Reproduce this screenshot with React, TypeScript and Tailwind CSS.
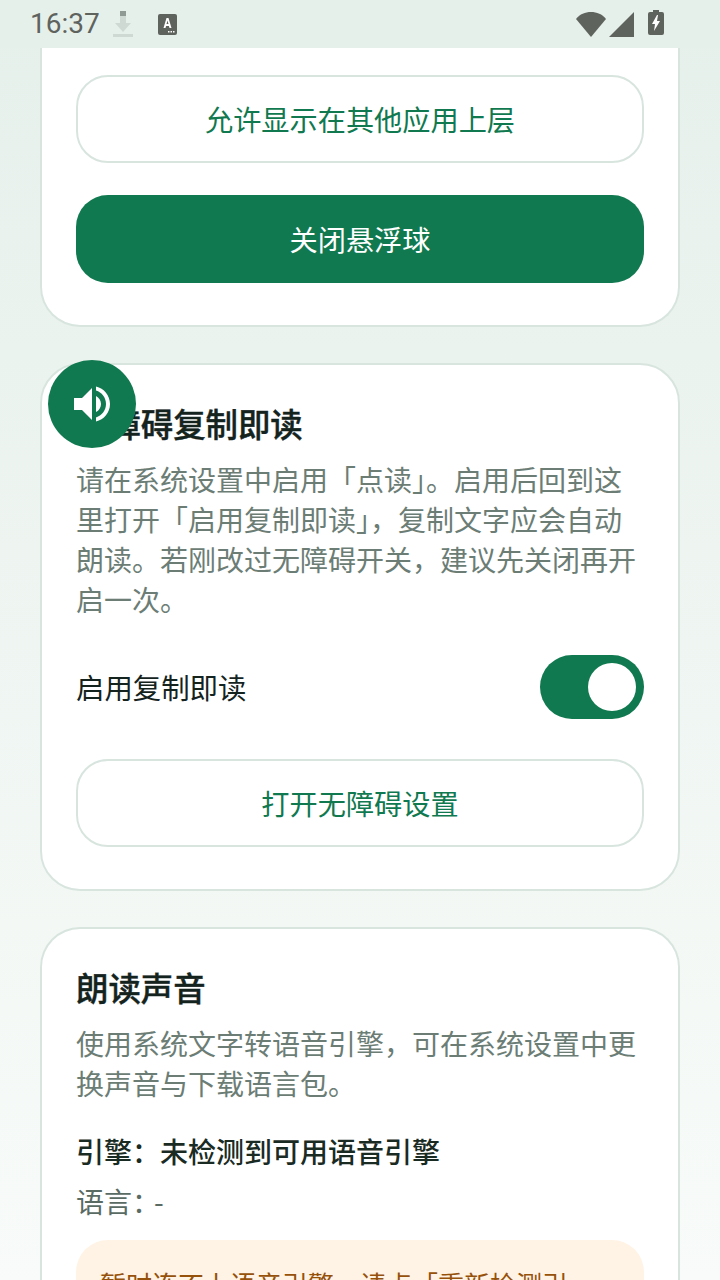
const cjk = "font-['Noto_Sans_CJK_SC','Noto_Sans',sans-serif]";

function StatusBar() {
  return (
    <div className="flex h-12 shrink-0 items-center justify-between bg-[#e6f0eb] pl-[30px] pr-[56px]">
      <div className="flex items-center">
        <span className="font-['Roboto',sans-serif] text-[28px] leading-none text-[#5f635e]">16:37</span>
        <svg width="20" height="26" viewBox="0 0 20 26" className="ml-[13px]">
          <rect x="7" y="0" width="6" height="5" fill="#8f9a94" />
          <rect x="7" y="5" width="6" height="7" fill="#cfd9d3" />
          <path d="M2 12h16l-8 9z" fill="#cfd9d3" />
          <rect x="0" y="23" width="20" height="3" fill="#cfd9d3" />
        </svg>
        <svg width="19" height="21" viewBox="0 0 19 21" className="ml-[25px]">
          <rect width="19" height="21" rx="2" fill="#5f635e" />
          <path d="M5.500 14l3-10h2l3 10h-2l-.6-2H8.100l-.6 2zm3-4h2l-1-3.500z" fill="#fff" />
          <rect x="10" y="17" width="1.500" height="1.500" fill="#fff" />
          <rect x="12.500" y="17" width="1.500" height="1.500" fill="#fff" />
          <rect x="15" y="17" width="1.500" height="1.500" fill="#fff" />
        </svg>
      </div>
      <div className="flex items-center">
        <svg width="30" height="25" viewBox="0 0 30 25">
          <path d="M0 7C4 2 9 0 15 0s11 2 15 7L15 25z" fill="#5f635e" />
        </svg>
        <svg width="25" height="25" viewBox="0 0 25 25" className="ml-[3px] mt-[1px]">
          <path d="M25 0v25H0z" fill="#5f635e" />
        </svg>
        <svg width="16" height="25" viewBox="0 0 16 25" className="ml-[14px] -mt-[3px]">
          <path d="M5 0h6v2h3a2 2 0 0 1 2 2v19a2 2 0 0 1-2 2H2a2 2 0 0 1-2-2V4a2 2 0 0 1 2-2h3z" fill="#5f635e" />
          <path d="M9 5l-5 9h3l-1 7 6-10H9l1-6z" fill="#fff" />
        </svg>
      </div>
    </div>
  );
}

function OutlineButton({ label }: { label: string }) {
  return (
    <button className="h-[88px] w-full rounded-[32px] border-2 border-[#d8e5df] bg-white text-[28.2px] text-[#10794f]">
      {label}
    </button>
  );
}

export default function App() {
  return (
    <div lang="zh-CN" className={`relative flex h-[1280px] w-[720px] flex-col overflow-hidden bg-gradient-to-b from-[#e6f0eb] to-[#f8fbf9] ${cjk}`}>
      <StatusBar />

      <main className="flex flex-col gap-9 px-10">
        <section className="flex flex-col gap-8 rounded-b-[40px] border-x-2 border-b-2 border-[#d8e5df] bg-white px-[34px] pb-[42px] pt-[27px]">
          <OutlineButton label="允许显示在其他应用上层" />
          <button className="h-[88px] w-full rounded-[32px] bg-[#10794f] text-[28.2px] text-white">关闭悬浮球</button>
        </section>

        <section className="rounded-[40px] border-2 border-[#d8e5df] bg-white px-[34px] pb-[42px] pt-[34px]">
          <h2 className="text-[32.4px] font-medium leading-[48px] text-[#14231d] [-webkit-text-stroke:0.4px_#14231d]">无障碍复制即读</h2>
          <p className="mt-3 text-[28px] leading-[40px] text-[#6b7d75]">
            请在系统设置中启用「点读」。启用后回到这里打开「启用复制即读」，复制文字应会自动朗读。若刚改过无障碍开关，建议先关闭再开启一次。
          </p>
          <div className="mt-9 flex h-[64px] items-center justify-between">
            <span className="text-[28.4px] text-[#14231d]">启用复制即读</span>
            <div className="flex h-16 w-[104px] items-center justify-end rounded-full bg-[#10794f] pr-2">
              <div className="size-12 rounded-full bg-white" />
            </div>
          </div>
          <div className="mt-10">
            <OutlineButton label="打开无障碍设置" />
          </div>
        </section>

        <section className="rounded-t-[40px] border-x-2 border-t-2 border-[#d8e5df] bg-white px-[34px] pt-[34px] pb-10">
          <h2 className="text-[32.4px] font-medium leading-[48px] text-[#14231d] [-webkit-text-stroke:0.4px_#14231d]">朗读声音</h2>
          <p className="mt-3 text-[28px] leading-[40px] text-[#6b7d75]">
            使用系统文字转语音引擎，可在系统设置中更换声音与下载语言包。
          </p>
          <p className="mt-[26px] text-[28px] font-medium leading-[44px] text-[#1a2b24]">引擎：未检测到可用语音引擎</p>
          <p className="mt-2 text-[28px] leading-[40px] text-[#5a6b64]">
            语言<span className="tracking-[-6px]">：</span>-
          </p>
          <div className="mt-[19px] rounded-[32px] bg-[#fff3e5] pb-5 pl-6 pr-[72px] pt-6 text-[26px] leading-[40px] text-[#96510b]">
            暂时连不上语音引擎，请点「重新检测引擎」
          </div>
        </section>
      </main>

      {/* 悬浮球 */}
      <div className="absolute left-12 top-[360px] flex size-[88px] items-center justify-center rounded-full bg-[#10794f]">
        <svg width="48" height="48" viewBox="0 0 24 24" fill="white">
          <path d="M3 9v6h4l5 5V4L7 9H3zm13.500 3c0-1.770-1.020-3.290-2.500-4.030v8.050c1.480-.73 2.500-2.250 2.500-4.020zM14 3.230v2.060c2.890.86 5 3.540 5 6.710s-2.110 5.850-5 6.710v2.060c4.010-.91 7-4.490 7-8.770s-2.990-7.860-7-8.770z" />
        </svg>
      </div>
    </div>
  );
}
